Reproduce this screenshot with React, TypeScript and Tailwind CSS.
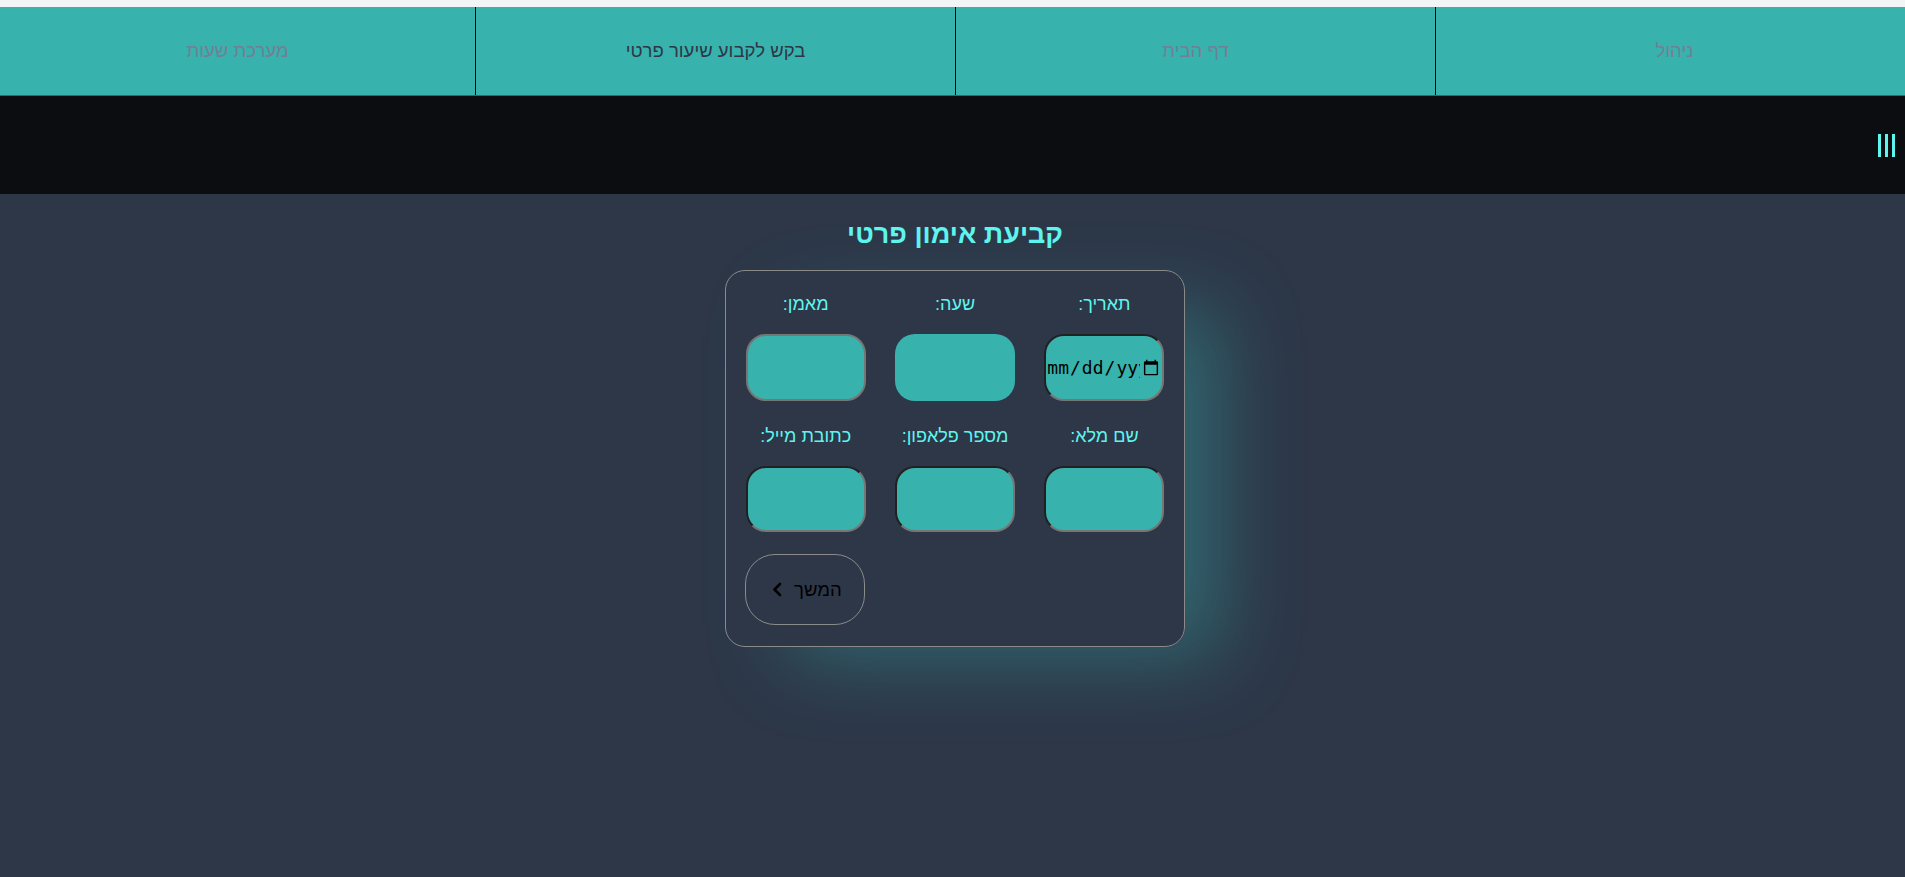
import React from "react";

function ChevronLeft() {
  return (
    <svg width="12" height="15" viewBox="0 0 12 15" fill="none" className="shrink-0">
      <path d="M9 2 L3.5 7.5 L9 13" stroke="#000" strokeWidth="2.6" strokeLinecap="round" strokeLinejoin="round" />
    </svg>
  );
}

function Field({ label, children }: { label: string; children: React.ReactNode }) {
  return (
    <div className="flex flex-col items-center">
      <div className="h-[22px] leading-[22px] text-[18px] text-[#5ff5ef] mt-[2px]">{label}</div>
      <div className="mt-[19px]">{children}</div>
    </div>
  );
}

export default function App() {
  const navItems = [
    { t: "ניהול", c: "text-[#718096] pl-[8px]" },
    { t: "דף הבית", c: "text-[#718096]" },
    { t: "בקש לקבוע שיעור פרטי", c: "text-[#2d3748]" },
    { t: "מערכת שעות", c: "text-[#718096]" },
  ];
  const inset = "border-2 border-[#767676] [border-style:inset]";
  return (
    <div dir="rtl" className="min-h-screen bg-[#2d3748] font-['Liberation_Sans','Noto_Sans',sans-serif]">
      <div className="h-[7px] bg-[#f3f4f6]" />
      <nav className="grid grid-cols-[470px_480px_480px_1fr] h-[89px] bg-[#38b2ac] border-b border-[#2b6f6b]">
        {navItems.map((n, i) => (
          <div
            key={n.t}
            className={`flex items-center justify-center text-[18.5px] ${n.c} ${i < 3 ? "border-l border-black" : ""}`}
          >
            {n.t}
          </div>
        ))}
      </nav>
      <div className="h-[98px] bg-[#0b0d11] flex items-center justify-start pr-[10px]">
        <div className="flex gap-[4px] mt-[1px]">
          <div className="w-[3px] h-[23px] bg-[#5ff5ef]" />
          <div className="w-[3px] h-[23px] bg-[#5ff5ef]" />
          <div className="w-[3px] h-[23px] bg-[#5ff5ef]" />
        </div>
      </div>
      <main className="flex flex-col items-center pl-[5px]">
        <h1 className="mt-[23px] text-[27px] leading-[34px] font-bold text-[#5ff5ef]">קביעת אימון פרטי</h1>
        <div className="mt-[19px] w-[460px] rounded-[20px] border border-[#8a8a8a] px-[20px] pt-[20px] pb-[21px] shadow-[50px_25px_80px_-15px_rgba(56,178,172,0.4)]">
          <div className="grid grid-cols-3 gap-x-[30px]">
            <Field label="תאריך:">
              <input
                type="date"
                dir="ltr"
                className={`w-[120px] h-[67px] rounded-[20px] bg-[#38b2ac] ${inset} px-0 text-[18px] font-['DejaVu_Sans_Mono',monospace] text-black outline-none`}
              />
            </Field>
            <Field label="שעה:">
              <div className="w-[120px] h-[67px] rounded-[20px] bg-[#38b2ac]" />
            </Field>
            <Field label="מאמן:">
              <div className="w-[120px] h-[67px] rounded-[20px] bg-[#38b2ac] border-2 border-[#767676]" />
            </Field>
          </div>
          <div className="grid grid-cols-3 gap-x-[30px] mt-[22px]">
            <Field label="שם מלא:">
              <input className={`w-[120px] h-[66px] rounded-[20px] bg-[#38b2ac] ${inset} outline-none`} />
            </Field>
            <Field label="מספר פלאפון:">
              <input className={`w-[120px] h-[66px] rounded-[20px] bg-[#38b2ac] ${inset} outline-none`} />
            </Field>
            <Field label="כתובת מייל:">
              <input className={`w-[120px] h-[66px] rounded-[20px] bg-[#38b2ac] ${inset} outline-none`} />
            </Field>
          </div>
          <div className="grid grid-cols-3 gap-x-[30px] mt-[22px]">
            <div />
            <div />
            <button className="w-[120px] h-[71px] rounded-[30px] border border-[#8b8b8b] flex items-center justify-center gap-[11px] pl-[2px] text-[18.5px] text-black">
              <span>המשך</span>
              <ChevronLeft />
            </button>
          </div>
        </div>
      </main>
    </div>
  );
}
